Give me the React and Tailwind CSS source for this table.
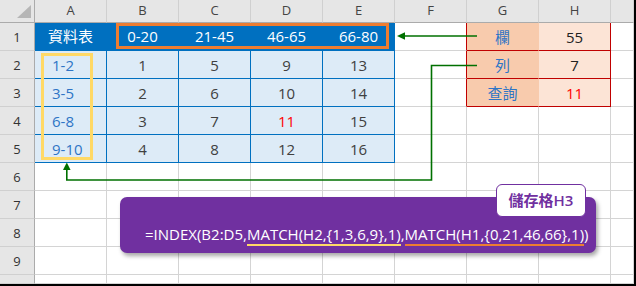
import React from "react";

const COLS = ["A", "B", "C", "D", "E", "F", "G", "H", ""];

const TABLE = {
  1: { 1: "資料表", 2: "0-20", 3: "21-45", 4: "46-65", 5: "66-80", 7: "欄", 8: "55" },
  2: { 1: "1-2", 2: "1", 3: "5", 4: "9", 5: "13", 7: "列", 8: "7" },
  3: { 1: "3-5", 2: "2", 3: "6", 4: "10", 5: "14", 7: "查詢", 8: "11" },
  4: { 1: "6-8", 2: "3", 3: "7", 4: "11", 5: "15" },
  5: { 1: "9-10", 2: "4", 3: "8", 4: "12", 5: "16" },
};

function cellClass(r, c) {
  if (r === 0 && c === 0)
    return "relative bg-[#e6e6e6] border-r border-b border-r-[#ababab] border-b-[#ababab]";
  if (r === 0)
    return "flex items-center justify-center bg-[#e6e6e6] border-r border-b border-r-[#d0d0d0] border-b-[#ababab] text-[13px] text-[#444]";
  if (c === 0)
    return "flex items-end justify-center pb-[3px] bg-[#e6e6e6] border-r border-b border-r-[#ababab] border-b-[#d0d0d0] text-[13px] text-[#333]";
  if (r === 1 && c >= 1 && c <= 5)
    return "flex items-center justify-center bg-[#0070c0] border-r border-b border-[#0070c0] text-white text-[15px]";
  if (r >= 2 && r <= 5 && c === 1)
    return "flex items-center pl-[17px] pt-[2px] bg-[#ddebf7] border-r border-b border-[#0070c0] text-[#2e75c6] text-[15px]";
  if (r >= 2 && r <= 5 && c >= 2 && c <= 5)
    return "flex items-center justify-center pt-[2px] bg-[#ddebf7] border-r border-b border-[#0070c0] text-[#404040] text-[15px]";
  if (r >= 1 && r <= 3 && c === 6)
    return "border-r border-b border-r-[#c00000] border-b-[#d4d4d4]";
  if (r >= 1 && r <= 3 && c === 7)
    return "flex items-center justify-center pt-[1px] bg-[#f8cbad] border-r border-b border-r-[#f8cbad] border-b-[#c00000] text-[#2e75c6] text-[15px]";
  if (r >= 1 && r <= 3 && c === 8)
    return "flex items-center justify-center pt-[1px] bg-[#fce4d6] border-r border-b border-[#c00000] text-[#222] text-[15px]";
  return "border-r border-b border-[#d4d4d4]";
}

function cellText(r, c) {
  if (r === 0) return c === 0 ? null : COLS[c - 1];
  // the last row is clipped by the window edge, so its number is not shown
  if (c === 0) return r < 10 ? String(r) : null;
  const row = TABLE[r];
  if (!row || row[c] === undefined) return null;
  const v = row[c];
  const red = (r === 4 && c === 4) || (r === 3 && c === 8);
  return red ? <span className="text-[#ff0000]">{v}</span> : v;
}

export default function App() {
  const rows = Array.from({ length: 11 }, (_, r) => r);
  const cols = Array.from({ length: 10 }, (_, c) => c);
  return (
    <div className="relative w-[636px] h-[286px] overflow-hidden bg-white border-r-2 border-b-2 border-black font-['Open_Sans','Noto_Sans_CJK_TC',sans-serif]">
      <div className="grid h-full grid-cols-[35px_repeat(8,72px)_1fr] grid-rows-[23px_repeat(9,28px)_1fr]">
        {rows.map((r) =>
          cols.map((c) => (
            <div key={`${r}-${c}`} className={cellClass(r, c)}>
              {r === 0 && c === 0 ? (
                <svg className="absolute inset-0" width="35" height="23">
                  <polygon points="31,5 31,18 17,18" fill="#b6b6b6" />
                </svg>
              ) : (
                cellText(r, c)
              )}
            </div>
          ))
        )}
      </div>

      {/* highlight frames */}
      <div className="absolute left-[116px] top-[23px] w-[273px] h-[26px] border-[3px] border-[#ed7d31]" />
      <div className="absolute left-[41px] top-[53px] w-[52px] h-[107px] border-[3px] border-[#ffd966]" />

      {/* connector arrows */}
      <svg className="absolute inset-0 pointer-events-none" width="636" height="286">
        <path d="M477 36 H404" stroke="#007000" strokeWidth="1.6" fill="none" />
        <polygon points="397,36 405,32.2 405,39.8" fill="#007000" />
        <path d="M477 65.5 H431.5 V180 H66.8 V169" stroke="#007000" strokeWidth="1.6" fill="none" />
        <polygon points="66.8,162.5 63,170 70.6,170" fill="#007000" />
      </svg>

      {/* formula card */}
      <div className="absolute left-[120px] top-[197px] w-[476px] h-[56px] rounded-[7px] bg-[#7030a0] shadow-[2px_3px_4px_rgba(0,0,0,0.35)] pl-[25px] pt-[27px]">
        <p className="text-[15px] text-white whitespace-nowrap leading-[20px]">
          =INDEX(B2:D5,
          <span className="border-b-2 border-[#ffd966]">MATCH(H2,{"{"}1,3,6,9{"}"},1)</span>,
          <span className="border-b-2 border-[#ed7d31]">MATCH(H1,{"{"}0,21,46,66{"}"},1)</span>)
        </p>
      </div>
      <div className="absolute left-[496px] top-[184px] w-[90px] h-[33px] rounded-[6px] bg-white border border-[#7030a0] flex items-center justify-center text-[15px] font-semibold text-[#7030a0]">
        儲存格H3
      </div>
    </div>
  );
}
